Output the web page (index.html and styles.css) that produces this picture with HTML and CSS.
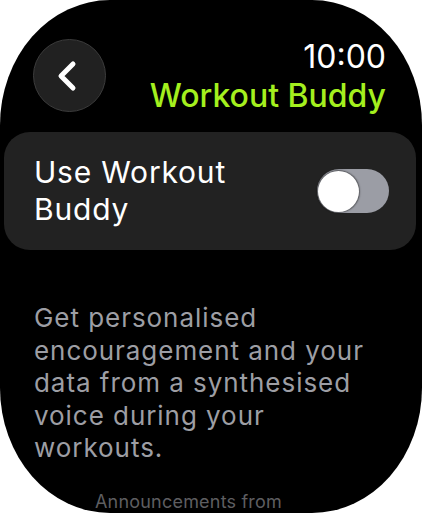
FILE: index.html
```html
<!DOCTYPE html>
<html>
<head>
<meta charset="utf-8">
<link rel="stylesheet" href="styles.css">
</head>
<body>
<div class="screen">
  <div class="header">
    <div class="back">
      <svg width="24" height="34" viewBox="0 0 24 34"><path d="M17 5 L5 17 L17 29" fill="none" stroke="#fff" stroke-width="5" stroke-linecap="round" stroke-linejoin="round"/></svg>
    </div>
    <div class="titles">
      <div class="time">10:00</div>
      <div class="title">Workout Buddy</div>
    </div>
  </div>
  <div class="card">
    <div class="card-label">Use Workout<br>Buddy</div>
    <div class="toggle"><div class="knob"></div></div>
  </div>
  <p class="desc">Get personalised encouragement and your data from a synthesised voice during your workouts.</p>
  <p class="note">Announcements from</p>
</div>
</body>
</html>
```
FILE: styles.css
```css
html, body {
  margin: 0;
  padding: 0;
  background: #fff;
}
.screen {
  width: 422px;
  height: 513px;
  background: #000;
  border-radius: 110px / 125px;
  overflow: hidden;
  font-family: Inter, "Noto Sans", sans-serif;
  color: #fff;
}
.header {
  display: flex;
  justify-content: space-between;
  align-items: flex-start;
  padding: 37px 36px 0 33px;
}
.back {
  width: 71px;
  height: 71px;
  margin-top: 2px;
  border-radius: 50%;
  background: #212121;
  border: 1.5px solid #3c3c3c;
  display: flex;
  align-items: center;
  justify-content: center;
}
.back svg {
  margin-left: -4px;
}
.titles {
  text-align: right;
}
.time {
  font-size: 32px;
  line-height: 39px;
  font-weight: 400;
}
.title {
  font-size: 32px;
  line-height: 39px;
  font-weight: 500;
  color: #a4f01e;
}
.card {
  margin: 17px 6px 0 4px;
  height: 118px;
  box-sizing: border-box;
  padding: 0 27px 0 30px;
  background: #222;
  border-radius: 26px;
  display: flex;
  align-items: center;
  justify-content: space-between;
}
.card-label {
  font-size: 30px;
  line-height: 37px;
  letter-spacing: 0.8px;
}
.toggle {
  width: 72px;
  height: 44px;
  border-radius: 22px;
  background: #9b9da5;
  display: flex;
  align-items: center;
  padding-left: 1px;
  box-sizing: border-box;
}
.knob {
  width: 41px;
  height: 41px;
  border-radius: 50%;
  background: #fff;
  box-shadow: 0 0 1.5px 1px rgba(0,0,0,0.45);
}
.desc {
  margin: 52px 40px 0 34px;
  font-size: 26px;
  line-height: 32.5px;
  letter-spacing: 0.95px;
  color: #9d9ea4;
}
.note {
  margin: 26px 0 0 95px;
  font-size: 18px;
  line-height: 22px;
  letter-spacing: 0.2px;
  color: #5e5e61;
}
```
